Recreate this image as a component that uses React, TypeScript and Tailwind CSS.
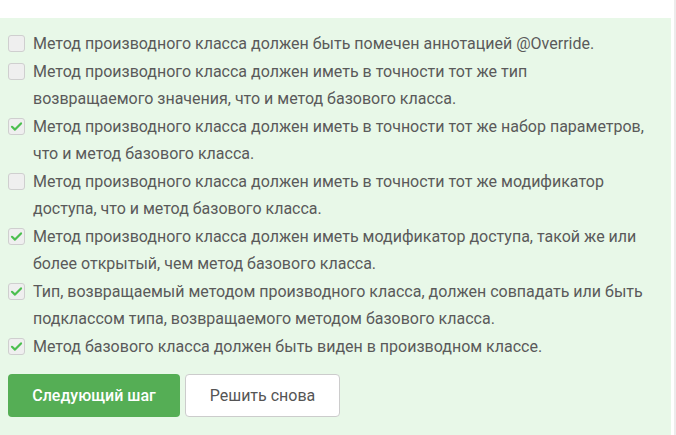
import React from 'react';

interface Option {
  text: string;
  checked: boolean;
}

const options: Option[] = [
  { text: 'Метод производного класса должен быть помечен аннотацией @Override.', checked: false },
  { text: 'Метод производного класса должен иметь в точности тот же тип возвращаемого значения, что и метод базового класса.', checked: false },
  { text: 'Метод производного класса должен иметь в точности тот же набор параметров, что и метод базового класса.', checked: true },
  { text: 'Метод производного класса должен иметь в точности тот же модификатор доступа, что и метод базового класса.', checked: false },
  { text: 'Метод производного класса должен иметь модификатор доступа, такой же или более открытый, чем метод базового класса.', checked: true },
  { text: 'Тип, возвращаемый методом производного класса, должен совпадать или быть подклассом типа, возвращаемого методом базового класса.', checked: true },
  { text: 'Метод базового класса должен быть виден в производном классе.', checked: true },
];

const CheckBox: React.FC<{ checked: boolean }> = ({ checked }) => (
  <div className="mt-[5px] h-[17px] w-[17px] shrink-0 rounded-[3px] border border-[#cfcfcf] bg-[#efefef] flex items-center justify-center">
    {checked && (
      <svg width="13" height="13" viewBox="0 0 13 13" fill="none">
        <path d="M2 6.8 L5 9.6 L11 3.4" stroke="#4cbf4f" strokeWidth="2.2" strokeLinecap="round" strokeLinejoin="round" />
      </svg>
    )}
  </div>
);

export default function App() {
  return (
    <div className="w-[676px] h-[435px] bg-white flex" style={{ fontFamily: 'Roboto, "Liberation Sans", sans-serif' }}>
      <div className="w-[671px] mt-[18px] bg-[#e8f8e8] pl-[8px] pt-[12px]">
        <div className="flex flex-col gap-[1px]">
          {options.map((o, i) => (
            <div key={i} className="flex items-start gap-[8px]">
              <CheckBox checked={o.checked} />
              <p className="text-[16px] leading-[27px] text-[#5a5a5a] w-[614px]">{o.text}</p>
            </div>
          ))}
        </div>
        <div className="mt-[14px] flex gap-[5px]">
          <button className="w-[172px] h-[43px] rounded-[4px] bg-[#55ae55] text-white text-[16px] font-medium">
            Следующий шаг
          </button>
          <button className="w-[155px] h-[43px] rounded-[4px] bg-white border border-[#cccccc] text-[#555] text-[16px]">
            Решить снова
          </button>
        </div>
      </div>
      <div className="w-[3px]" />
      <div className="w-[2px] bg-[#ececec]" />
    </div>
  );
}
